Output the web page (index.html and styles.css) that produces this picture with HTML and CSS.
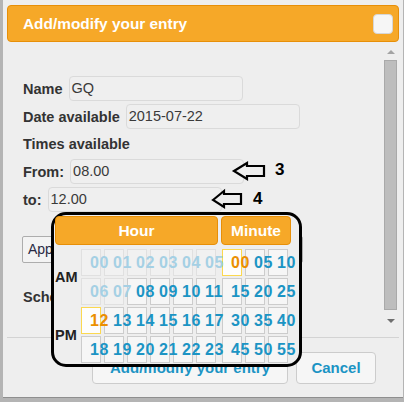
FILE: index.html
```html
<!DOCTYPE html>
<html>
<head>
<meta charset="utf-8">
<link rel="stylesheet" href="styles.css">
</head>
<body>
<div class="dialog">
  <div class="titlebar">
    <span class="title">Add/modify your entry</span>
    <span class="close"></span>
  </div>
  <div class="content">
    <div class="form">
      <div class="row"><span class="label">Name</span><span class="input w-name">GQ</span></div>
      <div class="row"><span class="label">Date available</span><span class="input w-date">2015-07-22</span></div>
      <div class="row text-row"><span class="label">Times available</span></div>
      <div class="row"><span class="label">From:</span><span class="input w-time">08.00</span></div>
      <div class="row"><span class="label">to:</span><span class="input w-time">12.00</span></div>
      <div class="apply">Apply times to schedule (...)</div>
      <div class="label sched">Schedule</div>
    </div>
    <div class="scroll">
      <span class="tri-up"></span>
      <span class="thumb"></span>
      <span class="tri-down"></span>
    </div>
  </div>
  <div class="buttonpane">
    <span class="btn btn-main">Add/modify your entry</span>
    <span class="btn btn-cancel">Cancel</span>
  </div>
</div>

<svg class="arrows" width="404" height="402" viewBox="0 0 404 402">
  <polygon points="234,171 247,163 247,166 264,166 264,176 247,176 247,179" fill="#eeeeee" stroke="#000" stroke-width="2.2" stroke-linejoin="miter"/>
  <polygon points="213,200 224,191 224,194 241,194 241,204 224,204 224,207" fill="#eeeeee" stroke="#000" stroke-width="2.2" stroke-linejoin="miter"/>
</svg>
<span class="num num3">3</span>
<span class="num num4">4</span>

<div class="picker">
  <div class="hours">
    <div class="phead">Hour</div>
    <div class="hbody">
      <div class="ampm"><span>AM</span><span>PM</span></div>
      <div class="grid g6">
        <span class="cell off"><span class="t">00</span></span><span class="cell off"><span class="t">01</span></span><span class="cell off"><span class="t">02</span></span><span class="cell off"><span class="t">03</span></span><span class="cell off"><span class="t">04</span></span><span class="cell off"><span class="t">05</span></span>
        <span class="cell off"><span class="t">06</span></span><span class="cell off"><span class="t">07</span></span><span class="cell"><span class="t">08</span></span><span class="cell"><span class="t">09</span></span><span class="cell"><span class="t">10</span></span><span class="cell"><span class="t">11</span></span>
        <span class="cell sel"><span class="t">12</span></span><span class="cell"><span class="t">13</span></span><span class="cell"><span class="t">14</span></span><span class="cell"><span class="t">15</span></span><span class="cell"><span class="t">16</span></span><span class="cell"><span class="t">17</span></span>
        <span class="cell"><span class="t">18</span></span><span class="cell"><span class="t">19</span></span><span class="cell"><span class="t">20</span></span><span class="cell"><span class="t">21</span></span><span class="cell"><span class="t">22</span></span><span class="cell"><span class="t">23</span></span>
      </div>
    </div>
  </div>
  <div class="minutes">
    <div class="phead">Minute</div>
    <div class="grid g3">
      <span class="cell sel"><span class="t">00</span></span><span class="cell"><span class="t">05</span></span><span class="cell"><span class="t">10</span></span>
      <span class="cell"><span class="t">15</span></span><span class="cell"><span class="t">20</span></span><span class="cell"><span class="t">25</span></span>
      <span class="cell"><span class="t">30</span></span><span class="cell"><span class="t">35</span></span><span class="cell"><span class="t">40</span></span>
      <span class="cell"><span class="t">45</span></span><span class="cell"><span class="t">50</span></span><span class="cell"><span class="t">55</span></span>
    </div>
  </div>
</div>
</body>
</html>
```

FILE: styles.css
```css
html, body {
  margin: 0;
  padding: 0;
}
body {
  width: 404px;
  height: 402px;
  overflow: hidden;
  position: relative;
  background: #b4b4b4;
  font-family: "Liberation Sans", Arial, sans-serif;
  color: #333333;
}
.dialog {
  margin-left: 3px;
  width: 400px;
  height: 398px;
  box-sizing: border-box;
  padding: 5px 4px 0 4px;
  background: #eeeeee;
  border-bottom: 1px solid #8e8e8e;
  display: flex;
  flex-direction: column;
}
.titlebar {
  height: 37px;
  box-sizing: border-box;
  border: 1px solid #e78f08;
  background: #f6a828;
  border-radius: 4px;
  display: flex;
  align-items: center;
  justify-content: space-between;
  padding: 0 5px 0 15px;
  flex: none;
}
.title {
  color: #ffffff;
  font-weight: bold;
  font-size: 15.4px;
}
.close {
  width: 20px;
  height: 20px;
  box-sizing: border-box;
  border: 1px solid #d6d6d6;
  border-radius: 4px;
  background: #f6f6f6;
}
.content {
  height: 295px;
  display: flex;
  flex: none;
}
.form {
  flex: 1;
  overflow: hidden;
  padding: 34px 0 0 16px;
  min-width: 0;
}
.row {
  display: flex;
  align-items: center;
  gap: 6px;
  margin-bottom: 3px;
  height: 25px;
}
.text-row {
  height: 24px;
}
.label {
  font-weight: bold;
  font-size: 14.5px;
  color: #333333;
  white-space: nowrap;
}
.input {
  height: 25px;
  box-sizing: border-box;
  border: 1px solid #dadada;
  border-radius: 4px;
  background: #efefef;
  font-size: 14.5px;
  line-height: 23px;
  padding-left: 2px;
  color: #3a3a3a;
  flex: none;
}
.w-name { width: 174px; }
.w-date { width: 174px; }
.w-time { width: 174px; }
.apply {
  margin: 24px 0 0 -1px;
  width: 281px;
  height: 27px;
  box-sizing: border-box;
  border: 1px solid #adadad;
  border-radius: 2px;
  background: #f3f3f3;
  font-size: 14px;
  line-height: 25px;
  padding-left: 5px;
  color: #2a2a44;
  white-space: nowrap;
  overflow: hidden;
}
.sched {
  margin-top: 24px;
  line-height: 20px;
}
.scroll {
  width: 16px;
  flex: none;
  display: flex;
  flex-direction: column;
  align-items: center;
  padding-top: 8px;
  box-sizing: border-box;
}
.tri-up {
  width: 0;
  height: 0;
  border-left: 4px solid transparent;
  border-right: 4px solid transparent;
  border-bottom: 4px solid #a3a3a3;
}
.thumb {
  margin-top: 6px;
  width: 13px;
  height: 250px;
  box-sizing: border-box;
  background: #bdbdbd;
  border: 1px solid #a9a9a9;
  margin-left: -2px;
}
.tri-down {
  margin-top: 9px;
  width: 0;
  height: 0;
  border-left: 4px solid transparent;
  border-right: 4px solid transparent;
  border-top: 4px solid #6f6f6f;
}
.buttonpane {
  border-top: 1px solid #d3d3d3;
  padding: 14px 23px 0 0;
  display: flex;
  justify-content: flex-end;
  gap: 8px;
  flex: none;
}
.btn {
  height: 32px;
  box-sizing: border-box;
  border: 1px solid #cccccc;
  border-radius: 4px;
  background: #f6f6f6;
  color: #1c94c4;
  font-weight: bold;
  font-size: 15px;
  line-height: 30px;
  text-align: center;
}
.btn-main { width: 196px; }
.btn-cancel { width: 80px; }

.arrows {
  position: absolute;
  left: 0;
  top: 0;
  pointer-events: none;
}
.num {
  position: absolute;
  font-weight: bold;
  font-size: 17px;
  line-height: 17px;
  color: #000000;
}
.num3 { left: 275px; top: 161px; }
.num4 { left: 253px; top: 190px; }

.picker {
  position: absolute;
  left: 51px;
  top: 212px;
  width: 251px;
  height: 155px;
  box-sizing: border-box;
  border: 3px solid #000000;
  border-radius: 15px;
  background: #eeeeee;
  padding: 1px 0 0 1px;
  display: flex;
  gap: 3px;
}
.hours { width: 163px; }
.minutes { width: 70px; }
.phead {
  height: 29px;
  box-sizing: border-box;
  border: 1px solid #e78f08;
  border-radius: 4px;
  background: #f6a828;
  color: #ffffff;
  font-weight: bold;
  font-size: 15.5px;
  line-height: 27px;
  text-align: center;
  margin-bottom: 4px;
}
.hbody {
  display: flex;
}
.ampm {
  width: 26px;
  display: flex;
  flex-direction: column;
  gap: 2px;
}
.ampm span {
  height: 56px;
  display: flex;
  align-items: center;
  font-weight: bold;
  font-size: 14.5px;
  color: #222222;
}
.grid {
  display: grid;
  grid-auto-rows: 27px;
  column-gap: 3px;
  row-gap: 2px;
}
.g6 { grid-template-columns: repeat(6, 20px); }
.g3 { grid-template-columns: repeat(3, 20px); padding-left: 1px; }
.cell {
  box-sizing: border-box;
  border: 1px solid #cccccc;
  background: #f6f6f6;
  color: #1c94c4;
  font-weight: bold;
  font-size: 16px;
  letter-spacing: 0.6px;
  line-height: 25px;
  padding-left: 8px;
  white-space: nowrap;
}
.cell .t {
  position: relative;
  z-index: 1;
}
.cell.off {
  border-color: #e0e0e0;
  background: #f1f1f1;
  color: #a5d0e4;
}
.cell.sel {
  border-color: #fbd850;
  background: #fdfdfd;
  color: #eb8f00;
}
```
